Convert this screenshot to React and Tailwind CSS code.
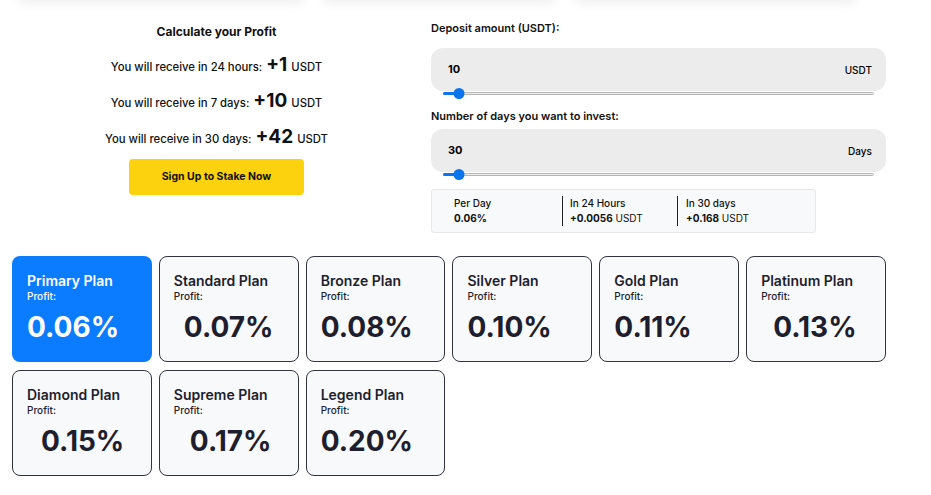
import React from "react";

const plans = [
  { name: "Primary Plan", rate: "0.06%", indent: "ml-0", active: true },
  { name: "Standard Plan", rate: "0.07%", indent: "ml-[10px]" },
  { name: "Bronze Plan", rate: "0.08%", indent: "ml-0" },
  { name: "Silver Plan", rate: "0.10%", indent: "ml-0" },
  { name: "Gold Plan", rate: "0.11%", indent: "ml-0" },
  { name: "Platinum Plan", rate: "0.13%", indent: "ml-[12px]" },
  { name: "Diamond Plan", rate: "0.15%", indent: "ml-[14px]" },
  { name: "Supreme Plan", rate: "0.17%", indent: "ml-[16px]" },
  { name: "Legend Plan", rate: "0.20%", indent: "ml-0" },
];

function Slider({ pct }) {
  return (
    <div className="relative mx-[12px] -mt-[4px] h-[12px]">
      <div className="absolute left-0 right-0 top-[5px] h-[3px] rounded-full border border-[#b5b5b5] bg-[#efefef]" />
      <div className="absolute left-0 top-[5px] h-[3px] rounded-full bg-[#0b75f0]" style={{ width: pct }} />
      <div
        className="absolute top-[0.5px] h-[11px] w-[11px] -translate-x-1/2 rounded-full bg-[#0b75f0]"
        style={{ left: pct }}
      />
    </div>
  );
}

function InputBox({ value, unit }) {
  return (
    <div className="flex h-[43px] items-center justify-between rounded-[12px] bg-[#ececec] pl-[17px] pr-[14px]">
      <span className="text-[11px] font-bold text-black">{value}</span>
      <span className="mt-[2px] text-[10px] font-medium text-black">{unit}</span>
    </div>
  );
}

function ReceiveLine({ label, amount }) {
  return (
    <p className="flex items-baseline justify-center text-[11.3px] font-medium leading-[29px] text-[#111]">
      <span>{label}</span>
      <span className="ml-[4px] text-[19px] font-bold leading-[29px]">{amount}</span>
      <span className="ml-[4px]">USDT</span>
    </p>
  );
}

function PlanCard({ plan }) {
  const active = plan.active;
  return (
    <div
      className={
        active
          ? "h-[106px] rounded-[8px] bg-[#0b7bff] px-[15px] pt-[16px] text-white"
          : "h-[106px] rounded-[8px] border border-[#33333d] bg-[#f8f9fa] px-[14px] pt-[15px] text-[#1e1e2e]"
      }
    >
      <div className="text-[14px] font-semibold leading-[18px]">{plan.name}</div>
      <div className="text-[10px] font-medium leading-[12px]">Profit:</div>
      <div className={"mt-[8px] text-[28px] font-bold leading-[34px] " + plan.indent}>{plan.rate}</div>
    </div>
  );
}

export default function App() {
  return (
    <div className="min-h-[495px] overflow-hidden bg-white font-['Inter',sans-serif]">
      <div className="-mt-[30px] flex h-[30px] gap-[18px] pl-[18px]">
        <div className="w-[287px] rounded-[8px] bg-white shadow-[0_3px_12px_rgba(0,0,0,0.07)]" />
        <div className="w-[233px] rounded-[8px] bg-white shadow-[0_3px_12px_rgba(0,0,0,0.07)]" />
        <div className="w-[283px] rounded-[8px] bg-white shadow-[0_3px_12px_rgba(0,0,0,0.07)]" />
      </div>

      <div className="ml-[12px] w-[874px]">
        <div className="grid grid-cols-[409px_1fr] gap-[10px]">
          <div className="flex flex-col items-center pt-[24px]">
            <h2 className="text-[12px] font-bold leading-[16px] text-[#111]">Calculate your Profit</h2>
            <div className="mt-[10px] flex flex-col gap-[4px]">
              <ReceiveLine label="You will receive in 24 hours:" amount="+1" />
              <ReceiveLine label="You will receive in 7 days:" amount="+10" />
              <ReceiveLine label="You will receive in 30 days:" amount="+42" />
            </div>
            <button className="mt-[5px] h-[36px] w-[175px] rounded-[4px] bg-[#fcd20f] text-[10.5px] font-bold text-[#111]">
              Sign Up to Stake Now
            </button>
          </div>

          <div className="pt-[21px]">
            <label className="block text-[11px] font-semibold leading-[14px] text-[#111]">Deposit amount (USDT):</label>
            <div className="mt-[13px]">
              <InputBox value="10" unit="USDT" />
              <Slider pct="16px" />
            </div>
            <label className="mt-[10px] block text-[11px] font-semibold leading-[14px] text-[#111]">
              Number of days you want to invest:
            </label>
            <div className="mt-[6px]">
              <InputBox value="30" unit="Days" />
              <Slider pct="16px" />
            </div>
            <div className="mt-[9px] flex h-[44px] w-[385px] items-center rounded-[3px] border border-[#e8e8e8] bg-[#f8f9fa] pl-[22px] text-[10px] leading-[15px] text-[#111]">
              <div className="w-[108px]">
                <div className="font-medium">Per Day</div>
                <div className="font-bold">0.06%</div>
              </div>
              <div className="w-[115px] border-l border-[#222] pl-[7px]">
                <div className="font-medium">In 24 Hours</div>
                <div>
                  <span className="font-bold">+0.0056</span> USDT
                </div>
              </div>
              <div className="border-l border-[#222] pl-[8px]">
                <div className="font-medium">In 30 days</div>
                <div>
                  <span className="font-bold">+0.168</span> USDT
                </div>
              </div>
            </div>
          </div>
        </div>

        <div className="mt-[23px] grid grid-cols-6 gap-x-[7px] gap-y-[8px]">
          {plans.map((p) => (
            <PlanCard key={p.name} plan={p} />
          ))}
        </div>
      </div>
    </div>
  );
}
